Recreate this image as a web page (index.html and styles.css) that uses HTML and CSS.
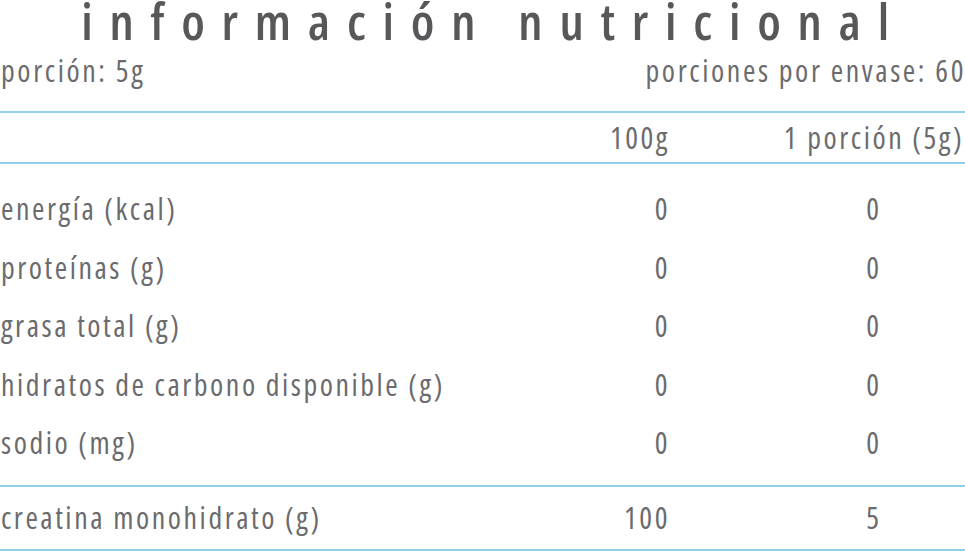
FILE: index.html
```html
<!DOCTYPE html>
<html lang="es">
<head>
<meta charset="utf-8">
<title>información nutricional</title>
<link rel="stylesheet" href="styles.css">
</head>
<body>
<main class="panel">
  <h1 class="title">información nutricional</h1>
  <div class="meta">
    <span>porción: 5g</span>
    <span>porciones por envase: 60</span>
  </div>
  <section class="facts">
    <div class="row head">
      <span class="name"></span>
      <span class="per100">100g</span>
      <span class="perserv">1 porción (5g)</span>
    </div>
    <div class="group main">
      <div class="row"><span class="name">energía (kcal)</span><span class="per100">0</span><span class="perserv">0</span></div>
      <div class="row"><span class="name">proteínas (g)</span><span class="per100">0</span><span class="perserv">0</span></div>
      <div class="row"><span class="name">grasa total (g)</span><span class="per100">0</span><span class="perserv">0</span></div>
      <div class="row"><span class="name">hidratos de carbono disponible (g)</span><span class="per100">0</span><span class="perserv">0</span></div>
      <div class="row"><span class="name">sodio (mg)</span><span class="per100">0</span><span class="perserv">0</span></div>
    </div>
    <div class="row extra">
      <span class="name">creatina monohidrato (g)</span>
      <span class="per100">100</span>
      <span class="perserv">5</span>
    </div>
  </section>
</main>
</body>
</html>
```
FILE: styles.css
```css
html, body {
  margin: 0;
  padding: 0;
  background: #ffffff;
}
body {
  font-family: "Open Sans", "Roboto Condensed", sans-serif;
  font-stretch: 75%;
  font-weight: 400;
  color: #6b6b6e;
  overflow: hidden;
}
.panel {
  width: 965px;
}
.title {
  margin: -5px 0 0 0;
  font-size: 51px;
  line-height: 50px;
  font-weight: 600;
  color: #58585b;
  letter-spacing: 16.75px;
  text-align: center;
  padding-left: 22px;
  white-space: nowrap;
}
.meta {
  display: flex;
  justify-content: space-between;
  margin: 9px -1px 0 1px;
  font-size: 30px;
  line-height: 34px;
  letter-spacing: 2.6px;
  white-space: nowrap;
}
.facts {
  margin-top: 23px;
  font-size: 30px;
  line-height: 34px;
  letter-spacing: 2.55px;
}
.row {
  display: grid;
  grid-template-columns: 1fr 110px 295px;
  align-items: center;
  white-space: nowrap;
}
.name {
  text-align: left;
  padding-left: 1px;
}
.per100 {
  text-align: right;
}
.perserv {
  text-align: center;
  padding-left: 113px;
}
.head {
  height: 49px;
  border-top: 2px solid #8fd1e8;
  border-bottom: 2px solid #8fd1e8;
}
.main {
  padding: 16px 0 12.5px;
}
.main .row {
  height: 58.5px;
}
.extra {
  height: 62px;
  border-top: 2px solid #8fd1e8;
  border-bottom: 2px solid #8fd1e8;
}
```
